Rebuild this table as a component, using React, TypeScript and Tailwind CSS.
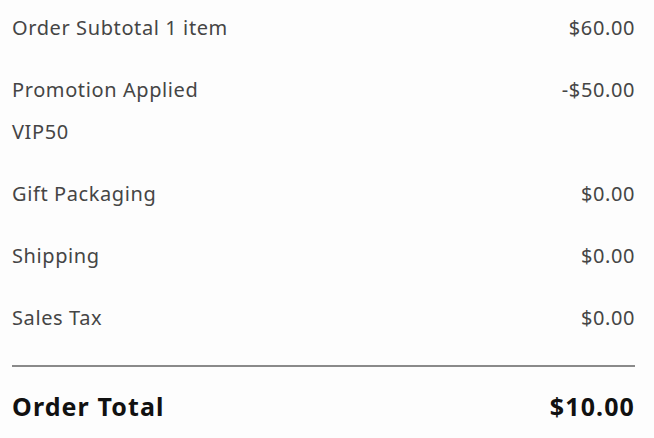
const rows = [
  { label: "Gift Packaging", value: "$0.00" },
  { label: "Shipping", value: "$0.00" },
  { label: "Sales Tax", value: "$0.00" },
]

export default function App() {
  return (
    <div
      className="h-[438px] w-[654px] bg-[#fdfdfd] pl-[12px] pr-[19px] pt-[14px] text-[#454545]"
      style={{ fontFamily: '"Noto Sans", "Liberation Sans", sans-serif' }}
    >
      <div className="flex flex-col gap-[34px] text-[20px] leading-[28px] tracking-[0.6px]">
        <div className="flex items-center justify-between">
          <span>Order Subtotal 1 item</span>
          <span>$60.00</span>
        </div>
        <div className="flex flex-col gap-[14px]">
          <div className="flex items-center justify-between">
            <span>Promotion Applied</span>
            <span>-$50.00</span>
          </div>
          <span>VIP50</span>
        </div>
        {rows.map((row) => (
          <div key={row.label} className="flex items-center justify-between">
            <span>{row.label}</span>
            <span>{row.value}</span>
          </div>
        ))}
      </div>
      <div className="mt-[33px] h-[2px] bg-[#8a8a8a]" />
      <div className="mt-[23px] flex items-center justify-between text-[25px] font-bold leading-[32px] tracking-[1.1px] text-[#111]">
        <span>Order Total</span>
        <span>$10.00</span>
      </div>
    </div>
  )
}
